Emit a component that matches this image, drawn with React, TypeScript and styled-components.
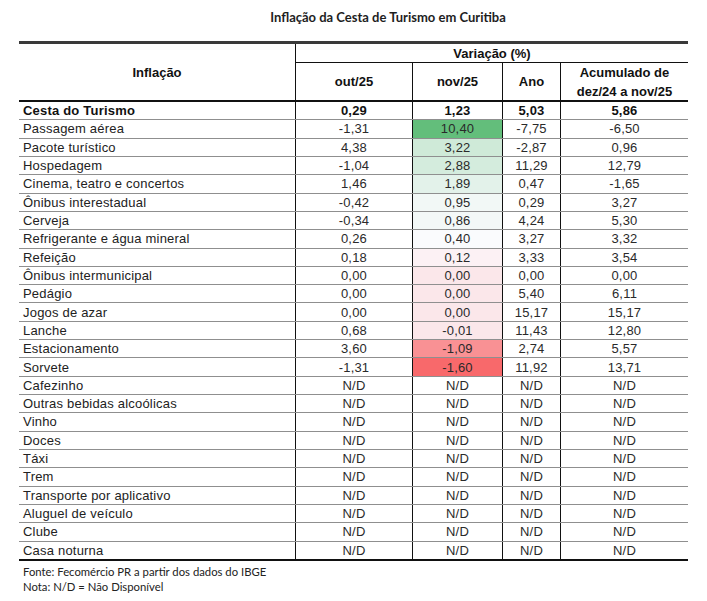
import React from "react";
import styled, { createGlobalStyle } from "styled-components";

const Global = createGlobalStyle`
  html, body { margin: 0; padding: 0; background: #ffffff; }
  body { font-family: "Liberation Sans", Arial, sans-serif; color: #1c1c1c; }
`;

const Page = styled.div`
  width: 707px;
  height: 601px;
  background: #ffffff;
  overflow: hidden;
`;

const Title = styled.div`
  box-sizing: border-box;
  height: 41px;
  padding: 9px 0 0 69px;
  text-align: center;
  font-family: Lato, "Liberation Sans", sans-serif;
  font-weight: 700;
  font-size: 13px;
  line-height: 16px;
  color: #1e1e1e;
`;

const Table = styled.div`
  margin-left: 19px;
  width: 669px;
  border-top: 3px solid #3a3a3a;
  border-bottom: 2px solid #111;
`;

const cols = "277px 117px 90px 58px 127px";

const Head = styled.div`
  display: grid;
  grid-template-columns: ${cols};
  grid-template-rows: 19px 37px;
  border-bottom: 2px solid #111;
  font-weight: 700;
  font-size: 13px;
  color: #111;
`;

const HeadCell = styled.div<{ $span?: string; $rows?: string; $last?: boolean; $under?: boolean }>`
  box-sizing: border-box;
  grid-column: ${(p) => p.$span || "auto"};
  grid-row: ${(p) => p.$rows || "auto"};
  display: flex;
  align-items: center;
  justify-content: center;
  text-align: center;
  line-height: 19px;
  border-right: ${(p) => (p.$last ? "none" : "1px solid #111")};
  border-bottom: ${(p) => (p.$under ? "1px solid #111" : "none")};
`;

const Row = styled.div<{ $last?: boolean }>`
  box-sizing: border-box;
  display: grid;
  grid-template-columns: ${cols};
  height: ${(p) => (p.$last ? "17.32px" : "18.32px")};
  border-bottom: ${(p) => (p.$last ? "none" : "1px solid #8f8f8f")};
  font-size: 13px;
  letter-spacing: 0.2px;
`;

const Label = styled.div<{ $bold?: boolean }>`
  box-sizing: border-box;
  display: flex;
  align-items: center;
  padding-left: 4px;
  border-right: 1px solid #111;
  font-weight: ${(p) => (p.$bold ? 700 : 400)};
  color: ${(p) => (p.$bold ? "#111" : "#222")};
  white-space: nowrap;
`;

const Value = styled.div<{ $bold?: boolean; $last?: boolean; $bg?: string }>`
  box-sizing: border-box;
  display: flex;
  align-items: center;
  justify-content: center;
  border-right: ${(p) => (p.$last ? "none" : "1px solid #111")};
  background: ${(p) => p.$bg || "transparent"};
  font-weight: ${(p) => (p.$bold ? 700 : 400)};
  color: ${(p) => (p.$bold ? "#111" : "#2a2a2a")};
`;

const Footer = styled.div`
  padding: 3.5px 0 0 23px;
  font-family: Lato, "Liberation Sans", sans-serif;
  font-size: 11.3px;
  line-height: 15px;
  color: #222;
`;

type R = [string, string, string, string, string];

const data: R[] = [
  ["Passagem aérea", "-1,31", "10,40", "-7,75", "-6,50"],
  ["Pacote turístico", "4,38", "3,22", "-2,87", "0,96"],
  ["Hospedagem", "-1,04", "2,88", "11,29", "12,79"],
  ["Cinema, teatro e concertos", "1,46", "1,89", "0,47", "-1,65"],
  ["Ônibus interestadual", "-0,42", "0,95", "0,29", "3,27"],
  ["Cerveja", "-0,34", "0,86", "4,24", "5,30"],
  ["Refrigerante e água mineral", "0,26", "0,40", "3,27", "3,32"],
  ["Refeição", "0,18", "0,12", "3,33", "3,54"],
  ["Ônibus intermunicipal", "0,00", "0,00", "0,00", "0,00"],
  ["Pedágio", "0,00", "0,00", "5,40", "6,11"],
  ["Jogos de azar", "0,00", "0,00", "15,17", "15,17"],
  ["Lanche", "0,68", "-0,01", "11,43", "12,80"],
  ["Estacionamento", "3,60", "-1,09", "2,74", "5,57"],
  ["Sorvete", "-1,31", "-1,60", "11,92", "13,71"],
  ...[
    "Cafezinho",
    "Outras bebidas alcoólicas",
    "Vinho",
    "Doces",
    "Táxi",
    "Trem",
    "Transporte por aplicativo",
    "Aluguel de veículo",
    "Clube",
    "Casa noturna",
  ].map((n) => [n, "N/D", "N/D", "N/D", "N/D"] as R),
];

const MIN = -1.6;
const MAX = 10.4;
const MID = 0.26;
const RED = [248, 105, 107];
const WHITE = [252, 252, 255];
const GREEN = [99, 190, 123];

function scaleColor(v: string): string | undefined {
  const n = parseFloat(v.replace(",", "."));
  if (isNaN(n)) return undefined;
  let to = GREEN;
  let t = 0;
  if (n >= MID) {
    t = (n - MID) / (MAX - MID);
  } else {
    to = RED;
    t = (MID - n) / (MID - MIN);
  }
  const c = WHITE.map((f, i) => Math.round(f + (to[i] - f) * t));
  return `rgb(${c[0]}, ${c[1]}, ${c[2]})`;
}

export default function App() {
  return (
    <Page>
      <Global />
      <Title>Inflação da Cesta de Turismo em Curitiba</Title>
      <Table>
        <Head>
          <HeadCell $rows="1 / span 2" $span="1">Inflação</HeadCell>
          <HeadCell $span="2 / span 4" $last $under>Variação (%)</HeadCell>
          <HeadCell>out/25</HeadCell>
          <HeadCell>nov/25</HeadCell>
          <HeadCell>Ano</HeadCell>
          <HeadCell $last>
            Acumulado de
            <br />
            dez/24 a nov/25
          </HeadCell>
        </Head>
        <Row>
          <Label $bold>Cesta do Turismo</Label>
          <Value $bold>0,29</Value>
          <Value $bold>1,23</Value>
          <Value $bold>5,03</Value>
          <Value $bold $last>5,86</Value>
        </Row>
        {data.map((r, i) => (
          <Row key={r[0]} $last={i === data.length - 1}>
            <Label>{r[0]}</Label>
            <Value>{r[1]}</Value>
            <Value $bg={scaleColor(r[2])}>{r[2]}</Value>
            <Value>{r[3]}</Value>
            <Value $last>{r[4]}</Value>
          </Row>
        ))}
      </Table>
      <Footer>
        Fonte: Fecomércio PR a partir dos dados do IBGE
        <br />
        Nota: N/D = Não Disponível
      </Footer>
    </Page>
  );
}
